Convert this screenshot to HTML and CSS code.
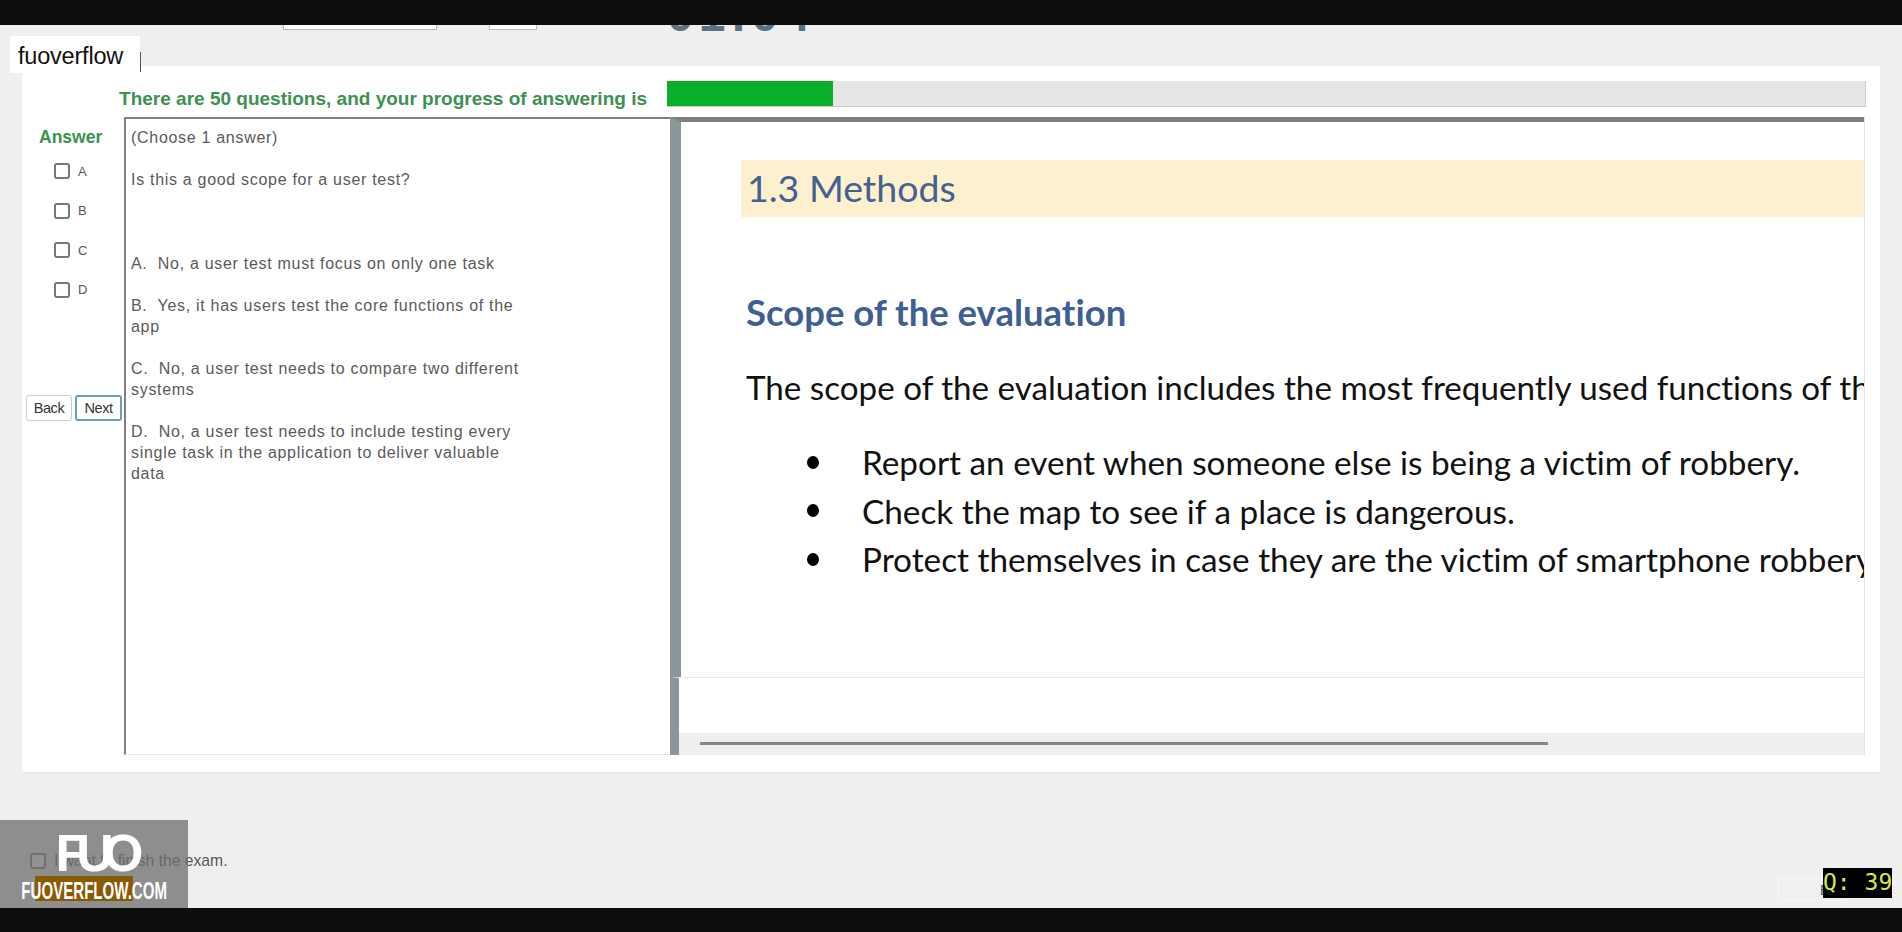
FILE: index.html
```html
<!DOCTYPE html>
<html lang="en">
<head>
    <meta charset="UTF-8">
    <meta name="viewport" content="width=device-width, initial-scale=1.0">
    <title>Exam</title>
    <link rel="stylesheet" href="styles.css">
</head>
<body>
    <div class="letterbox"></div>

    <div class="exam">
        <div class="clock-row">
            <div class="select-box wide"></div>
            <div class="select-box small"></div>
            <div class="clock">01:04</div>
        </div>

        <div class="user-tag">fuoverflow</div>

        <div class="card">
            <div class="progress-row">
                <div class="progress-text">There are 50 questions, and your progress of answering is</div>
                <div class="progress-track"><div class="progress-fill"></div></div>
            </div>

            <div class="main-row">
                <div class="answers">
                    <div class="answers-title">Answer</div>
                    <label class="option"><span class="check"></span>A</label>
                    <label class="option"><span class="check"></span>B</label>
                    <label class="option"><span class="check"></span>C</label>
                    <label class="option"><span class="check"></span>D</label>
                    <div class="nav-buttons">
                        <button class="nav-button">Back</button>
                        <button class="nav-button active">Next</button>
                    </div>
                </div>

                <div class="question">
                    <p class="gap-1">(Choose 1 answer)</p>
                    <p class="gap-3">Is this a good scope for a user test?</p>
                    <p class="gap-1">A.&nbsp; No, a user test must focus on only one task</p>
                    <p class="gap-1">B.&nbsp; Yes, it has users test the core functions of the app</p>
                    <p class="gap-1">C.&nbsp; No, a user test needs to compare two different systems</p>
                    <p>D.&nbsp; No, a user test needs to include testing every single task in the application to deliver valuable data</p>
                </div>

                <div class="slide">
                    <div class="slide-image">
                        <div class="slide-band">1.3 Methods</div>
                        <div class="slide-heading">Scope of the evaluation</div>
                        <div class="slide-line">The scope of the evaluation includes the most frequently used functions of the app</div>
                        <ul class="slide-list">
                            <li>Report an event when someone else is being a victim of robbery.</li>
                            <li>Check the map to see if a place is dangerous.</li>
                            <li>Protect themselves in case they are the victim of smartphone robbery</li>
                        </ul>
                    </div>
                    <div class="slide-blank"></div>
                    <div class="slide-scroll"><div class="slide-thumb"></div></div>
                </div>
            </div>
        </div>

        <div class="footer">
            <label class="finish"><span class="check"></span>I want to finish the exam.</label>
            <button class="exit-button">Exit</button>
        </div>

        <div class="watermark">
            <div class="watermark-logo">FUO</div>
            <div class="watermark-site"><span class="watermark-text">FUOVERFLOW.COM</span></div>
        </div>
        <div class="q-badge">Q: 39</div>
    </div>

    <div class="letterbox bottom"></div>
</body>
</html>
```

FILE: styles.css
```css
* {
    box-sizing: border-box;
}
body {
    margin: 0;
    height: 932px;
    overflow: hidden;
    display: flex;
    flex-direction: column;
    background-color: #efefef;
    font-family: "Liberation Sans", Arial, sans-serif;
}
.letterbox {
    height: 25px;
    background-color: #0e0e0e;
}
.letterbox.bottom {
    height: 24px;
}
.exam {
    position: relative;
    flex: 1;
}

/* top row, mostly cut off by the black bar */
.clock-row {
    height: 41px;
    display: flex;
    align-items: flex-start;
    padding-left: 283px;
    overflow: hidden;
}
.select-box {
    height: 5px;
    background-color: #fff;
    border: 1px solid #bbb;
    border-top: 0;
}
.select-box.wide {
    width: 154px;
}
.select-box.small {
    width: 48px;
    margin-left: 52px;
}
.clock {
    margin: -39px 0 0 130px;
    font-size: 48px;
    line-height: 57px;
    font-weight: bold;
    letter-spacing: 5px;
    color: #5d7180;
}
.user-tag {
    position: absolute;
    left: 10px;
    top: 11px;
    width: 130px;
    height: 37px;
    padding: 7px 0 0 8px;
    background-color: #fff;
    font-size: 23.5px;
    letter-spacing: -0.2px;
    color: #111;
}
.user-tag::after {
    content: "";
    position: absolute;
    right: -1px;
    bottom: 1px;
    width: 1px;
    height: 20px;
    background-color: #555;
}

.card {
    width: 1858px;
    height: 707px;
    margin-left: 22px;
    padding-top: 15px;
    background-color: #fff;
    border-bottom: 1px solid #e6e6e6;
}
.progress-row {
    display: flex;
    height: 26px;
}
.progress-text {
    width: 625px;
    padding-top: 6px;
    text-align: right;
    font-size: 19px;
    line-height: 24px;
    font-weight: bold;
    white-space: nowrap;
    color: #3d9150;
}
.progress-track {
    width: 1199px;
    height: 26px;
    margin-left: 20px;
    background-color: #e6e6e6;
    border-bottom: 1px solid #ccc;
    border-right: 1px solid #ccc;
}
.progress-fill {
    width: 166px;
    height: 25px;
    background-color: #0aae2a;
}

.main-row {
    display: flex;
    margin-top: 10px;
    height: 638px;
}

.answers {
    width: 102px;
}
.answers-title {
    margin: 10px 0 0 17px;
    font-size: 17.5px;
    line-height: 20px;
    font-weight: bold;
    color: #3d9150;
}
.option {
    display: flex;
    align-items: center;
    height: 16px;
    margin-left: 32px;
    margin-bottom: 23.5px;
    font-size: 13px;
    color: #555;
}
.answers-title + .option {
    margin-top: 16px;
}
.check {
    width: 16px;
    height: 16px;
    margin-right: 8px;
    background-color: #fff;
    border: 2px solid #777;
    border-radius: 3px;
}
.nav-buttons {
    display: flex;
    gap: 3px;
    margin: 97px 0 0 4px;
}
.nav-button {
    width: 46px;
    height: 26px;
    padding: 0;
    font-family: inherit;
    font-size: 14.5px;
    letter-spacing: -0.4px;
    color: #333;
    background-color: #fff;
    border: 1px solid #ccc;
    border-radius: 3px;
}
.nav-button.active {
    width: 47px;
    border: 2px solid #6d9fb8;
}

.question {
    width: 546px;
    padding: 8px 148px 0 5px;
    border-left: 2px solid #808080;
    border-top: 2px solid #808080;
    border-bottom: 1px solid #e8e8e8;
    font-size: 16px;
    line-height: 21px;
    letter-spacing: 0.7px;
    color: #5a5a5a;
}
.question p {
    margin: 0;
}
.question .gap-1 {
    margin-bottom: 21px;
}
.question .gap-3 {
    margin-bottom: 63px;
}

.slide {
    width: 1195px;
    overflow: hidden;
    border-right: 1px solid #e4e4e4;
}
.slide-image {
    height: 560px;
    padding: 38px 0 0 60px;
    border-left: 11px solid #8a9698;
    border-top: 5px solid #808080;
    background-color: #fff;
    font-family: Lato, sans-serif;
    font-variant-ligatures: none;
    white-space: nowrap;
    overflow: hidden;
}
.slide-band {
    height: 57px;
    padding-left: 6px;
    background-color: #fdf0cf;
    font-size: 37.5px;
    line-height: 55px;
    color: #44618f;
}
.slide-heading {
    margin: 73px 0 0 5px;
    font-size: 36.5px;
    line-height: 44px;
    font-weight: bold;
    color: #3f5f94;
}
.slide-line {
    margin: 31px 0 0 5px;
    font-size: 33.2px;
    line-height: 44px;
    color: #111;
}
.slide-list {
    list-style: none;
    margin: 29px 0 0;
    padding: 0;
    font-size: 33.3px;
    line-height: 44px;
    color: #111;
}
.slide-list li {
    display: flex;
    align-items: center;
    height: 48.5px;
}
.slide-list li::before {
    content: "";
    flex-shrink: 0;
    width: 12px;
    height: 13px;
    margin: 0 43px 0 66px;
    border-radius: 50%;
    background-color: #000;
}
.slide-blank {
    height: 56px;
    background-color: #fff;
    border-left: 9px solid #8a9698;
    border-top: 1px solid #e8e8e8;
}
.slide-scroll {
    height: 22px;
    padding: 9px 0 0 21px;
    background-color: #eeeeee;
    border-left: 9px solid #8a9698;
}
.slide-thumb {
    width: 848px;
    height: 3px;
    background-color: #858585;
}

.footer {
    display: flex;
    justify-content: space-between;
    align-items: flex-start;
    height: 135px;
    padding: 79px 54px 0 30px;
}
.finish {
    display: flex;
    align-items: center;
    font-size: 15.7px;
    color: #555;
}
.exit-button {
    width: 70px;
    height: 23px;
    margin-top: 26px;
    padding: 0 0 0 41px;
    text-align: left;
    font-family: inherit;
    font-size: 14px;
    color: #555;
    background-color: #f0f0f0;
    border: 1px solid #f6f6f6;
}

.watermark {
    position: absolute;
    left: 0;
    top: 795px;
    width: 188px;
    height: 88px;
    background-color: rgba(110, 110, 110, 0.75);
    text-align: center;
}
.watermark-logo {
    margin-top: 13px;
    font-size: 52px;
    line-height: 40px;
    font-weight: bold;
    letter-spacing: -11px;
    color: #fff;
}
.watermark-site {
    position: relative;
    display: flex;
    justify-content: center;
    height: 25px;
    margin-top: 3px;
}
.watermark-site::before {
    content: "";
    position: absolute;
    left: 35px;
    top: 0;
    width: 98px;
    height: 25px;
    background-color: #8a5a00;
}
.watermark-text {
    position: relative;
    font-size: 23px;
    line-height: 31px;
    font-weight: bold;
    white-space: nowrap;
    color: #fff;
    transform: scaleX(0.655);
}
.q-badge {
    position: absolute;
    left: 1823px;
    top: 843px;
    width: 69px;
    height: 30px;
    background-color: #000;
    font-family: "DejaVu Sans Mono", monospace;
    font-size: 23px;
    line-height: 29px;
    white-space: nowrap;
    color: #d6e64a;
}
```
